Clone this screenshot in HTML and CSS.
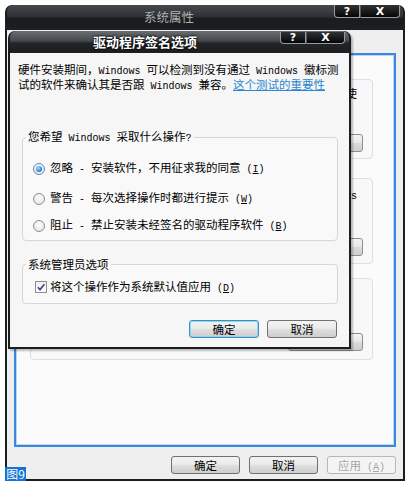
FILE: index.html
```html
<!DOCTYPE html>
<html>
<head>
<meta charset="utf-8">
<link rel="stylesheet" href="styles.css">
</head>
<body>
<div class="win outer">
  <div class="titlebar">
    <div class="title dim">系统属性</div>
    <div class="caps"><span class="cap q">?</span><span class="cap x">X</span></div>
  </div>
  <div class="frame">
    <div class="panel">
      <div class="gbox g1"><p class="frag f1">使</p><div class="pbtn b1"></div></div>
      <div class="gbox g2"><p class="frag f2"><span class="en">Windows</span></p><div class="pbtn b2"></div></div>
      <div class="gbox g3"><div class="pbtn b3"></div></div>
    </div>
    <div class="btnrow">
      <button class="btn">确定</button>
      <button class="btn">取消</button>
      <button class="btn dis">应用<span class="en"> (<u>A</u>)</span></button>
    </div>
  </div>
</div>

<div class="win dlg">
  <div class="titlebar dtb">
    <div class="title bright">驱动程序签名选项</div>
    <div class="caps dcaps"><span class="cap q">?</span><span class="cap x dx">X</span></div>
  </div>
  <div class="dbody">
    <p class="intro">硬件安装期间，<span class="en">Windows </span>可以检测到没有通过<span class="en"> Windows </span>徽标测<br>试的软件来确认其是否跟<span class="en"> Windows </span>兼容。<a class="link">这个测试的重要性</a></p>
    <fieldset class="grp grp1">
      <legend>您希望<span class="en"> Windows </span>采取什么操作<span class="en">?</span></legend>
      <div class="opt o1"><span class="radio on"></span><span>忽略<span class="en"> - </span>安装软件，不用征求我的同意<span class="en"> (<u>I</u>)</span></span></div>
      <div class="opt o2"><span class="radio"></span><span>警告<span class="en"> - </span>每次选择操作时都进行提示<span class="en"> (<u>W</u>)</span></span></div>
      <div class="opt o3"><span class="radio"></span><span>阻止<span class="en"> - </span>禁止安装未经签名的驱动程序软件<span class="en"> (<u>B</u>)</span></span></div>
    </fieldset>
    <fieldset class="grp grp2">
      <legend>系统管理员选项</legend>
      <div class="opt o4"><span class="chk"><svg width="10" height="10" viewBox="0 0 10 10"><path d="M1.8 5.2 L4 7.6 L8.4 2.2" fill="none" stroke="#3a4d8c" stroke-width="1.7"/></svg></span><span>将这个操作作为系统默认值应用<span class="en"> (<u>D</u>)</span></span></div>
    </fieldset>
    <div class="btnrow drow">
      <button class="btn dbtn focus">确定</button>
      <button class="btn dbtn">取消</button>
    </div>
  </div>
</div>

<div class="badge">图9</div>
</body>
</html>
```

FILE: styles.css
```css
* { box-sizing: border-box; margin: 0; padding: 0; }
html, body { width: 409px; height: 486px; overflow: hidden; }
body {
  position: relative;
  background: #ffffff;
  font-family: "Noto Sans CJK SC", "Noto Sans", sans-serif;
  font-size: 11.5px;
  line-height: 13px;
  color: #000;
}
.en { font-family: "Liberation Mono", monospace; font-size: 10px; }
u { text-decoration: underline; }

.win {
  position: absolute;
  display: flex;
  flex-direction: column;
  background: #1b1d1f;
  border-radius: 7px 7px 0 0;
  overflow: hidden;
}
.outer { left: 5px; top: 5px; width: 400px; height: 476px; padding: 0 2px 2px; }
.dlg { left: 8px; top: 31px; width: 343px; height: 318px; padding: 0 2px 2px;
  box-shadow: 2px 2px 2px rgba(0,0,0,0.25); overflow: visible; }

.titlebar {
  display: flex;
  height: 25px;
  flex: none;
  background: linear-gradient(#45494d 0%, #2e3236 45%, #191b1d 55%, #1d2022 100%);
  border-radius: 6px 6px 0 0;
}
.dtb { height: 22px; background: linear-gradient(#6a6e72 0%, #44484b 45%, #222527 55%, #1c1e20 100%); }
.title { flex: 1; text-align: center; }
.dim { color: #b0b0b0; font-size: 12.5px; line-height: 23px; padding-right: 3px; }
.bright { color: #fff; font-weight: bold; font-size: 13px; line-height: 22px; text-shadow: 0 0 3px #000, 0 0 2px #000; }

.caps { display: flex; align-self: flex-start; margin-right: 3px; }
.dcaps { margin-top: 1px; margin-right: 4px; }
.cap {
  height: 13px;
  background: linear-gradient(#303234, #050505);
  border: 1px solid #9a9a9a;
  border-top: none;
  color: #fff;
  font: bold 11px "DejaVu Sans", sans-serif;
  display: flex; align-items: center; justify-content: center;
}
.q { width: 26px; border-radius: 0 0 0 4px; }
.x { width: 40px; border-left: 1px solid #555; border-radius: 0 0 4px 0; }
.dcaps .cap { height: 12px; }
.dx { width: 39px; }

.frame {
  flex: 1;
  background: #efefef;
  display: flex;
  flex-direction: column;
  padding: 23px 7px 0;
}
.panel {
  height: 394px;
  flex: none;
  border: 2px solid #3d86dd;
  box-shadow: inset 0 0 0 1px #b6d6f6;
  background: #fbfbfb;
  display: flex;
  flex-direction: column;
}
.gbox {
  margin-left: 14px;
  width: 343px;
  border: 1px solid #dedede;
  border-radius: 4px;
  background: #f8f8f8;
  display: flex;
  flex-direction: column;
  align-items: flex-end;
  padding-right: 9px;
}
.g1 { margin-top: 24px; height: 80px; padding-top: 7px; }
.g2 { margin-top: 19px; height: 86px; padding-top: 9px; }
.g3 { margin-top: 14px; height: 82px; padding-top: 54px; }
.frag { margin-right: 6px; }
.pbtn {
  width: 75px; height: 18px;
  border: 1px solid #8e8e8e;
  border-radius: 3px;
  background: linear-gradient(#f4f4f4, #e9e9e9 48%, #dadada 52%, #d0d0d0);
}
.b1 { margin-top: 34px; }
.b2 { margin-top: 35px; }

.btnrow { display: flex; justify-content: flex-end; gap: 9px; margin-top: 9px; }
.btn {
  width: 69px; height: 18px;
  font-family: inherit; font-size: 11.5px; line-height: 16px;
  border: 1px solid #707070;
  border-radius: 3px;
  background: linear-gradient(#f3f3f3, #ebebeb 45%, #dddddd 55%, #cfcfcf);
  color: #000;
}
.btn.dis { border-color: #b4b8ba; background: #f4f4f4; color: #a6a6a6; }

.dbody {
  flex: 1;
  background: #f6f6f6;
  display: flex;
  flex-direction: column;
}
.intro { margin: 10px 0 0 8px; white-space: nowrap; }
.link { color: #2b86cf; text-decoration: underline; }

.grp {
  margin: 37px 11px 0 12px;
  border: 1px solid #d6d6d6;
  border-radius: 4px;
  background: #f9f9f9;
  padding: 0 0 7px 3px;
}
.grp legend { padding: 0 2px; line-height: 13px; }
.grp2 { margin-top: 17px; padding-bottom: 9px; }
.opt { display: flex; align-items: center; height: 14px; margin-left: 7px; white-space: nowrap; }
.o1 { margin-top: 16.5px; }
.o2 { margin-top: 16px; }
.o3 { margin-top: 13px; }
.o4 { margin-top: 9.5px; margin-left: 9px; }

.radio {
  flex: none;
  width: 12px; height: 12px;
  border-radius: 50%;
  border: 1px solid #8e9090;
  background: radial-gradient(circle at 50% 40%, #ffffff, #dedede);
  margin-right: 5px;
  display: flex; align-items: center; justify-content: center;
}
.radio.on { border-color: #5f8ab8; }
.radio.on::after {
  content: "";
  width: 6px; height: 6px;
  border-radius: 50%;
  background: radial-gradient(circle at 40% 35%, #a9e2ff, #2a7bd0 65%, #1d5fae);
}
.chk {
  flex: none;
  width: 12px; height: 12px;
  border: 1px solid #8e9090;
  background: linear-gradient(#eeeeee, #ffffff);
  margin-right: 3px;
  display: flex; align-items: center; justify-content: center;
}
.chk svg { display: block; }

.drow { margin: 16px 12px 0 0; gap: 8px; }
.dbtn { width: 70px; }
.btn.focus { border-color: #3c8fbf; box-shadow: inset 0 0 0 1px #8ad6f3; }

.badge {
  position: absolute;
  left: 5px; top: 467px;
  width: 21px; height: 14px;
  background: #1473d6;
  color: #fff;
  font-size: 12px;
  line-height: 14px;
  text-align: center;
  white-space: nowrap;
}
```
